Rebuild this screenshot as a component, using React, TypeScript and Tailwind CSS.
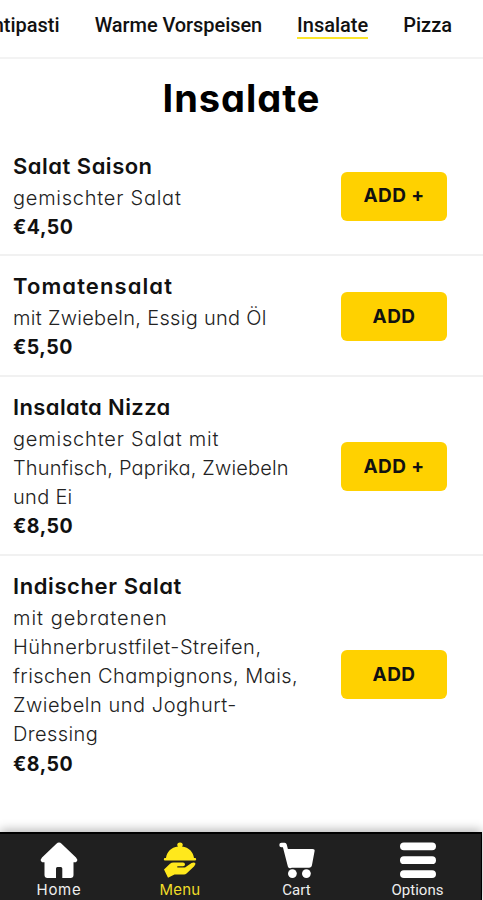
import React from "react";

type Item = { name: string; nameTrack: string; lines: { text: string; track: string }[]; price: string; action: string; row: string };

const items: Item[] = [
  {
    name: "Salat Saison", nameTrack: "tracking-[0.5px]",
    lines: [{ text: "gemischter Salat", track: "tracking-[0.75px]" }],
    price: "€4,50", action: "ADD +", row: "h-[114px] pt-[8px] border-b-2",
  },
  {
    name: "Tomatensalat", nameTrack: "tracking-[1.1px]",
    lines: [{ text: "mit Zwiebeln, Essig und Öl", track: "tracking-[0.3px]" }],
    price: "€5,50", action: "ADD", row: "h-[121px] pt-[14px] border-b-2",
  },
  {
    name: "Insalata Nizza", nameTrack: "tracking-[0.38px]",
    lines: [
      { text: "gemischter Salat mit", track: "tracking-[0.8px]" },
      { text: "Thunfisch, Paprika, Zwiebeln", track: "tracking-[0.16px]" },
      { text: "und Ei", track: "tracking-[0.3px]" },
    ],
    price: "€8,50", action: "ADD +", row: "h-[179px] pt-[14px] border-b-2",
  },
  {
    name: "Indischer Salat", nameTrack: "tracking-[0.6px]",
    lines: [
      { text: "mit gebratenen", track: "tracking-[1px]" },
      { text: "Hühnerbrustfilet-Streifen,", track: "tracking-[0.5px]" },
      { text: "frischen Champignons, Mais,", track: "tracking-[0.43px]" },
      { text: "Zwiebeln und Joghurt-", track: "tracking-[0.53px]" },
      { text: "Dressing", track: "tracking-[0.4px]" },
    ],
    price: "€8,50", action: "ADD", row: "h-[235px] pt-[14px]",
  },
];

function HomeIcon() {
  return (
    <svg width="38" height="38" viewBox="0 0 38 38" fill="#fff">
      <path d="M19 1.6 Q20.4 1.6 21.6 2.8 L36 16.6 Q38 18.7 36.7 20.4 Q35.7 21.6 33.5 21.3 V34 Q33.5 37 30.5 37 H22.3 V27.5 Q22.3 26 20.8 26 H17.4 Q16 26 16 27.5 V37 H7.5 Q4.5 37 4.5 34 V21.3 Q2.3 21.6 1.3 20.4 Q0 18.7 2 16.6 L16.4 2.8 Q17.6 1.6 19 1.6Z" />
    </svg>
  );
}

function DishIcon() {
  return (
    <svg width="34" height="38" viewBox="0 0 34 38" fill="#ffe81c">
      <path d="M14.2 4.2 A2.8 2.7 0 0 1 19.8 4.2 L19 5.5 C26 6.3 30.2 11 31 17 H32 Q33.2 17 33.2 18.2 Q33.2 19.4 32 19.4 H2 Q.8 19.4 .8 18.2 Q.8 17 2 17 H3 C3.8 11 8 6.3 15 5.5Z" />
      <path d="M1 28.6 L7 22.7 Q8.5 21.6 10.5 21.6 H20 Q22 21.8 22 23.4 Q22 25 20 25.3 H14.3 V26.5 H22 L28.5 22 Q31 20.8 32.3 22 Q33 23.5 31 25.4 L23.5 32.5 Q22.5 33.5 21 33.5 H11.5 L5 36.8Z" />
    </svg>
  );
}

function CartIcon() {
  return (
    <svg width="38" height="38" viewBox="0 0 38 38" fill="#fff">
      <path d="M3.5 4 H6.6 L12 25" fill="none" stroke="#fff" strokeWidth="4.4" strokeLinecap="round" strokeLinejoin="round" />
      <path d="M7.5 8 H34.5 Q37 8 36.6 10 L34 24 Q33.5 26.8 31 26.8 H14 Q11.2 26.8 10.6 24Z" />
      <circle cx="14.4" cy="32.6" r="4.4" />
      <circle cx="28.4" cy="32.6" r="4.4" />
    </svg>
  );
}

function BarsIcon() {
  return (
    <svg width="36" height="38" viewBox="0 0 36 38" fill="#fff">
      <rect x="0" y="1.4" width="36" height="7.8" rx="3.9" />
      <rect x="0" y="15.3" width="36" height="7.8" rx="3.9" />
      <rect x="0" y="29.2" width="36" height="7.8" rx="3.9" />
    </svg>
  );
}

export default function App() {
  return (
    <div className="flex h-[900px] w-[483px] flex-col overflow-hidden bg-white font-['Inter',sans-serif] text-black [font-feature-settings:'cv11']">
      <nav className="flex h-[59px] shrink-0 justify-end border-b-2 border-[#f3f3f3] pr-[31px] pt-[10px] font-['Roboto',sans-serif] text-[20px] font-medium leading-[30px] whitespace-nowrap text-[#111]">
        <div className="mr-[35px]">Antipasti</div>
        <div className="mr-[35px] tracking-[-0.07px]">Warme Vorspeisen</div>
        <div className="mr-[35px] h-[29px] border-b-2 border-[#fbe62a]">Insalate</div>
        <div>Pizza</div>
      </nav>
      <h1 className="h-[83px] shrink-0 pt-[16px] text-center text-[38px] font-bold leading-[46px] tracking-[1px]">Insalate</h1>
      <main className="flex flex-col">
        {items.map((it) => (
          <section key={it.name} className={"flex shrink-0 justify-between border-[#f1f1f1] pl-[13px] pr-[36px] " + it.row}>
            <div className="whitespace-nowrap">
              <h2 className="text-[22px] font-semibold leading-[33px] text-[#111]"><span className={it.nameTrack}>{it.name}</span></h2>
              <p className="pt-[0.6px] text-[20px] font-light leading-[29.2px] text-[#222]">
                {it.lines.map((l) => (
                  <span key={l.text} className={"block " + l.track}>{l.text}</span>
                ))}
              </p>
              <p className="text-[19.5px] font-bold leading-[29.3px] tracking-[0.5px] text-[#111]">{it.price}</p>
            </div>
            <div className="flex flex-col justify-center pb-[12px]">
              <button className="h-[49px] w-[106px] rounded-[6px] bg-[#ffd100] pt-px text-[19px] font-bold tracking-[0.4px] text-[#111]">{it.action}</button>
            </div>
          </section>
        ))}
      </main>
      <footer className="mt-auto mr-px grid h-[68px] shrink-0 grid-cols-[118px_124px_108px_1fr] border-t-2 border-r border-black bg-[#202020] text-[15px] leading-[18px] text-[#eee] shadow-[0_-2px_10px_rgba(0,0,0,0.3)]">
        <div className="flex flex-col items-center pt-[7px] tracking-[0.7px]"><HomeIcon /><span className="pt-[2px]">Home</span></div>
        <div className="flex flex-col items-center pt-[7px] tracking-[0.2px] text-[#f2dd28]"><DishIcon /><span className="pt-[2px]">Menu</span></div>
        <div className="flex flex-col items-center pt-[7px] pl-px font-['Roboto',sans-serif]"><CartIcon /><span className="pt-[2px]">Cart</span></div>
        <div className="flex flex-col items-center pt-[7px] pl-[4px] font-['Roboto',sans-serif]"><BarsIcon /><span className="pt-[2px]">Options</span></div>
      </footer>
    </div>
  );
}
